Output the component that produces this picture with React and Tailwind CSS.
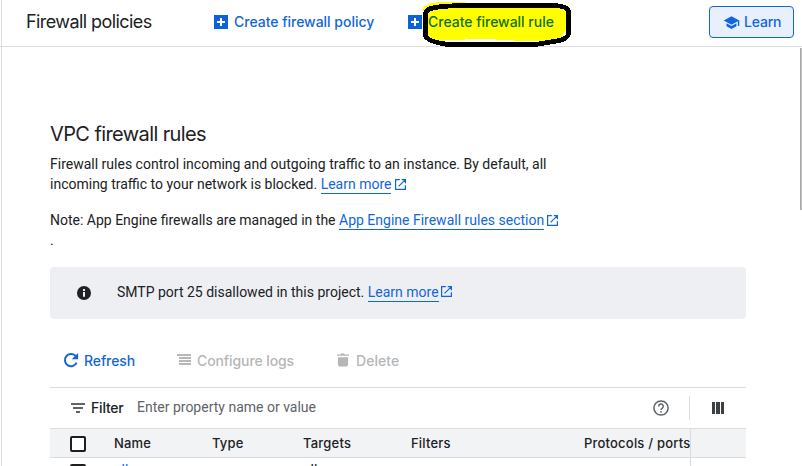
const G = "font-['Inter',sans-serif] whitespace-nowrap";

function PlusBox() {
  return (
    <svg className="size-[14px] shrink-0" viewBox="0 0 14 14" shapeRendering="crispEdges">
      <rect width="14" height="14" fill="#0b62d9" />
      <path d="M6 3h2v3h3v2H8v3H6V8H3V6h3z" fill="#fff" />
    </svg>
  );
}

function ExternalLink({ children, width, gap }) {
  return (
    <span className="inline-flex items-center text-[#1266dc]">
      <span className={`h-[20px] border-b border-[#1266dc] ${width}`}>{children}</span>
      <svg className={`size-[11px] ${gap}`} viewBox="0 0 11 11" fill="none" stroke="currentColor" strokeWidth="1.2">
        <path d="M4.8.6H.6v9.8h9.8V6.2M6.7.6h3.7v3.7M10.4.6 3.6 7.4" />
      </svg>
    </span>
  );
}

function Checkbox() {
  return <span className="block size-4 rounded-[2px] border-2 border-[#1f1f1f] bg-white" />;
}

function Header() {
  return (
    <header className="relative -ml-[2px] flex h-[47px] shrink-0 items-center border-b border-[#dadce0] pb-[3px] pl-[26px]">
      <h1 className={`${G} w-[188px] text-[18px] tracking-[-0.58px] text-[#202124]`}>Firewall policies</h1>
      <div className="flex w-[194px] items-center gap-[6px]">
        <PlusBox />
        <span className={`${G} text-[14px] font-medium tracking-[-0.02px] text-[#1266dc]`}>Create firewall policy</span>
      </div>
      <PlusBox />
      <span className={`${G} relative z-10 ml-[6px] w-[281px] text-[14px] font-medium tracking-[-0.02px] text-[#14710a]`}>Create firewall rule</span>
      <svg className="absolute left-[415px] top-0 h-[48px] w-[160px]" viewBox="415 0 160 48" shapeRendering="crispEdges">
        <path d="M423 7 431 3 440 2H465V4L566 6V31L563 33 562 40 547 41H515L512 40 480 39 450 40 438 41 427 36z" fill="#ffff00" />
        <path d="M433 8Q442 5.500 475 5.500H553Q568.500 6 568.500 12V34Q567 40 554 41.500L537 44.200H446Q426 41 425.500 35V14Q426 9 433 8z" fill="none" stroke="#000" strokeWidth="4.800" />
      </svg>
      <button className="mt-[1px] flex h-8 w-[85px] items-center rounded-[4px] border border-[#1266dc] bg-[#e8f0fe] pl-[13px] text-[#1266dc]">
        <svg className="size-[17px]" viewBox="0 0 24 24" fill="currentColor">
          <path d="M5 13.180v4L12 21l7-3.820v-4L12 17l-7-3.820zM12 3 1 9l11 6 9-4.910V17h2V9L12 3z" />
        </svg>
        <span className={`${G} ml-[4px] text-[14px] font-medium tracking-[-0.200px]`}>Learn</span>
      </button>
    </header>
  );
}

export default function App() {
  return (
    <div className="flex h-[466px] w-[802px] overflow-hidden bg-white pl-px font-['Roboto',sans-serif] text-[14px] leading-[20px] text-[#202124]">
      <div className="flex w-[801px] flex-col border-l border-[#dadce0]">
        <Header />
        <div className="flex h-[419px] justify-between">
          <main className="ml-[48px] w-[696px] pt-[74px]">
            <h2 className={`${G} h-[33px] text-[20px] leading-[26px] tracking-[-0.6px]`}>VPC firewall rules</h2>
            <p className="h-[56px] whitespace-nowrap">
              Firewall rules control incoming and outgoing traffic to an instance. By default, all
              <br />
              incoming traffic to your network is blocked.{" "}
              <ExternalLink width="w-[70px]" gap="ml-[4px]">Learn more</ExternalLink>
            </p>
            <p className="h-[57px] whitespace-nowrap">
              Note: App Engine firewalls are managed in the{" "}
              <ExternalLink width="w-[205px]" gap="ml-[3px]">App Engine Firewall rules section</ExternalLink>
              <br />.
            </p>
            <div className="flex h-[52px] items-center rounded-[4px] bg-[#eeeff3] pl-[26px]">
              <svg className="mr-[25px] size-4" viewBox="0 0 24 24" fill="#202124">
                <path d="M12 1.500a10.500 10.500 0 1 0 0 21 10.500 10.500 0 0 0 0-21zm1.500 16h-3v-7h3v7zm0-8.500h-3V6h3v3z" />
              </svg>
              <span className="mb-[3px] whitespace-nowrap">
                SMTP port 25 disallowed in this project.{" "}
                <ExternalLink width="w-[71px]" gap="ml-[2px]">Learn more</ExternalLink>
              </span>
            </div>
            <div className={`${G} flex h-[68px] items-center pl-[12px] pt-[16px] text-[14px] font-medium tracking-[-0.1px] text-[#b5b6b8]`}>
              <div className="flex w-[115px] items-center text-[#1266dc]">
                <svg className="mb-[2px] mr-[4px] size-[18px]" viewBox="0 0 24 24" fill="none" stroke="currentColor" strokeWidth="2.700">
                  <path d="M19.500 15.500A8.200 8.200 0 1 1 17.800 6.200L20 8.500" />
                  <path d="M21.500 2.500v8.500H13z" fill="currentColor" stroke="none" />
                </svg>
                Refresh
              </div>
              <div className="flex w-[160px] items-center">
                <svg className="mb-[2px] mr-[6px] h-[12px] w-[14px]" viewBox="0 0 14 12" fill="currentColor" shapeRendering="crispEdges">
                  <path d="M0 0h14v2H0zM2 3h12v2H2zM2 6h12v2H2zM2 9h12v2H2z" />
                </svg>
                Configure logs
              </div>
              <div className="flex items-center">
                <svg className="mb-[2px] mr-[7px] h-[14px] w-[12px]" viewBox="0 0 13 14" fill="currentColor">
                  <path d="M0 1h4V0h4v1h5v1.500H0zM1 4h11v8q0 2-2 2H3q-2 0-2-2z" />
                </svg>
                <span className="tracking-[0.05px]">Delete</span>
              </div>
            </div>
            <section className="border-t border-[#dadce0]">
              <div className="flex h-10 items-center pl-[21px]">
                <svg className="mr-[6px] h-[11px] w-[14px]" viewBox="0 0 14 11" fill="#5f6368" shapeRendering="crispEdges">
                  <path d="M0 0h14v2H0zM2 4h10v2H2zM5 8h4v2H5z" />
                </svg>
                <span className={`${G} w-[46px] text-[14px] font-medium tracking-[-0.200px]`}>Filter</span>
                <span className="mb-[2px] w-[516px] text-[#5f6368]">Enter property name or value</span>
                <svg className="size-4" viewBox="0 0 16 16" fill="none" stroke="#5f6368" strokeWidth="1.500">
                  <circle cx="8" cy="8" r="7.100" />
                  <path d="M5.700 6.500a2.300 2.300 0 1 1 3.500 1.800C8.400 8.800 8 9.100 8 10" />
                  <path d="M8 11v1.500" />
                </svg>
                <span className="ml-5 h-6 w-px bg-[#dadce0]" />
                <svg className="ml-[22px] h-3 w-3" viewBox="0 0 12 12" fill="#3c4043" shapeRendering="crispEdges">
                  <path d="M0 0h3v12H0zM4 0h4v12H4zM9 0h3v12H9z" />
                </svg>
              </div>
              <div className={`${G} flex h-[30px] items-center border-y border-[#dadce0] bg-[#f1f3f4] pl-[20px] text-[13px] font-medium tracking-[0.2px]`}>
                <span className="mt-[2px] w-[44px]"><Checkbox /></span>
                <span className="w-[98px]">Name</span>
                <span className="w-[91px]">Type</span>
                <span className="w-[108px]">Targets</span>
                <span className="w-[173px]">Filters</span>
                <span className="w-[107px] overflow-hidden border-r border-[#dadce0] leading-[28px]">Protocols / ports</span>
              </div>
              <div className="flex h-[40px] w-[641px] border-r border-[#dadce0] pl-[20px] pt-[2px]">
                <span className="mt-[4px] w-[44px]"><Checkbox /></span>
                <span className="w-[189px] text-[#1266dc]">all</span>
                <span>all</span>
              </div>
            </section>
          </main>
          <div className="mt-px h-[162px] w-[2px] border-l border-[#a8a8a8] bg-[#c1c1c1]" />
        </div>
      </div>
    </div>
  );
}
